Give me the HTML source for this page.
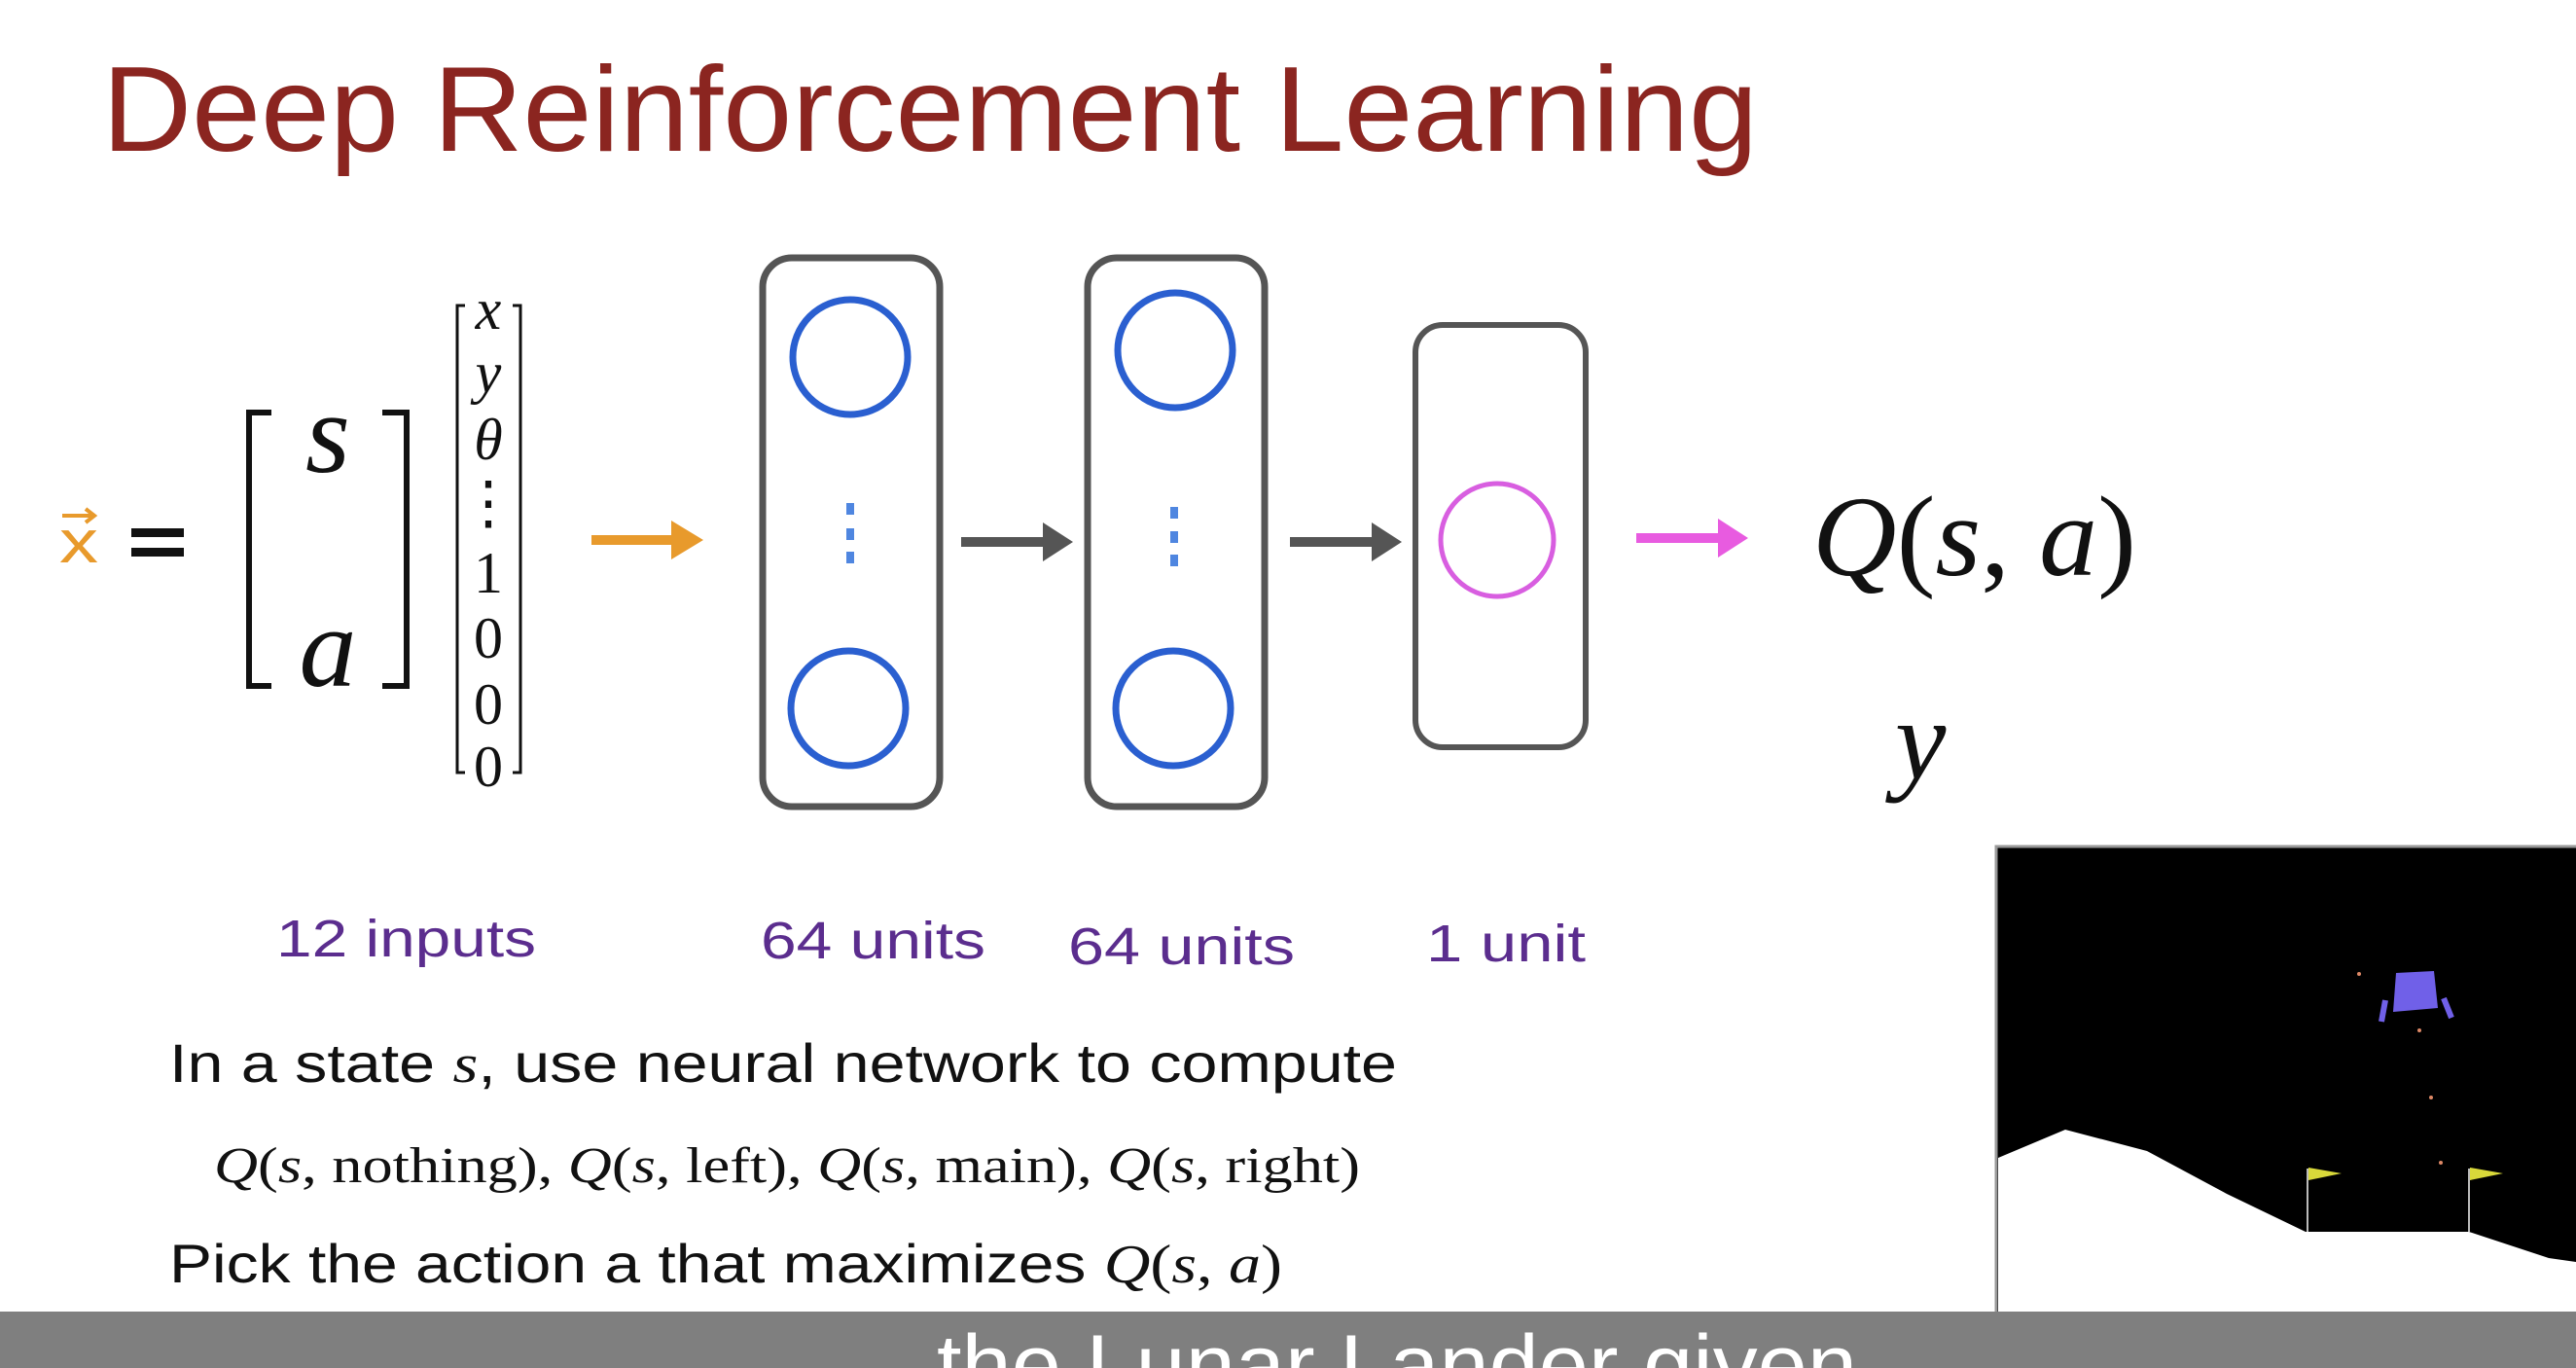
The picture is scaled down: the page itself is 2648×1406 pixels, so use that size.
<!DOCTYPE html>
<html><head><meta charset="utf-8"><style>
html,body{margin:0;padding:0;background:#fff;width:2648px;height:1406px;overflow:hidden}
svg{display:block}
</style></head><body>
<svg width="2648" height="1406" viewBox="0 0 2648 1406" xmlns="http://www.w3.org/2000/svg">
<rect width="2648" height="1406" fill="#fff"/>
<text x="105" y="155" font-family="Liberation Sans, sans-serif" font-size="124" fill="#8b2520" textLength="1702" lengthAdjust="spacingAndGlyphs">Deep Reinforcement Learning</text>

<text x="61" y="578" font-family="Liberation Sans, sans-serif" font-size="62" fill="#e89a2c" textLength="40" lengthAdjust="spacingAndGlyphs">x</text>
<path d="M64 530 H96 M88 523 L97 530 L88 537" stroke="#e89a2c" stroke-width="4" fill="none"/>
<rect x="135" y="543" width="54" height="9" fill="#111"/>
<rect x="135" y="563" width="54" height="9" fill="#111"/>

<path d="M279 424 H256 V705 H279" stroke="#111" stroke-width="6" fill="none"/>
<path d="M393 424 H418 V705 H393" stroke="#111" stroke-width="6" fill="none"/>
<text x="337" y="485" text-anchor="middle" font-family="Liberation Serif, serif" font-style="italic" font-size="118" fill="#111">s</text>
<text x="337" y="705" text-anchor="middle" font-family="Liberation Serif, serif" font-style="italic" font-size="118" fill="#111">a</text>

<path d="M478 314 H470 V794 H478" stroke="#111" stroke-width="3" fill="none"/>
<path d="M527 314 H535 V794 H527" stroke="#111" stroke-width="3" fill="none"/>
<g font-family="Liberation Serif, serif" font-size="60" fill="#111" text-anchor="middle">
<text x="502" y="338" font-style="italic">x</text>
<text x="502" y="403" font-style="italic">y</text>
<text x="502" y="472" font-style="italic">θ</text>
<text x="502" y="537">⋮</text>
<text x="502" y="609">1</text>
<text x="502" y="676">0</text>
<text x="502" y="744">0</text>
<text x="502" y="808">0</text>
</g>

<g stroke-width="10">
<line x1="608" y1="555" x2="695" y2="555" stroke="#e89a2c"/>
<line x1="988" y1="557" x2="1075" y2="557" stroke="#555"/>
<line x1="1326" y1="557" x2="1413" y2="557" stroke="#555"/>
<line x1="1682" y1="553" x2="1769" y2="553" stroke="#e85be0"/>
</g>
<polygon points="690,535 723,555 690,575" fill="#e89a2c"/>
<polygon points="1072,537 1103,557 1072,577" fill="#555"/>
<polygon points="1410,537 1441,557 1410,577" fill="#555"/>
<polygon points="1766,533 1797,553 1766,573" fill="#e85be0"/>

<rect x="784" y="265" width="182" height="564" rx="30" fill="none" stroke="#555" stroke-width="7"/>
<rect x="1118" y="265" width="182" height="564" rx="30" fill="none" stroke="#555" stroke-width="7"/>
<rect x="1455" y="334" width="175" height="434" rx="28" fill="none" stroke="#555" stroke-width="6"/>
<g fill="none" stroke="#2a5fd0" stroke-width="7">
<ellipse cx="874" cy="367" rx="59" ry="59"/>
<ellipse cx="872" cy="728" rx="59" ry="59"/>
<ellipse cx="1208" cy="360" rx="59" ry="59"/>
<ellipse cx="1206" cy="728" rx="59" ry="59"/>
</g>
<g fill="#4f86e0">
<rect x="870" y="517" width="8" height="12"/><rect x="870" y="543" width="8" height="12"/><rect x="870" y="567" width="8" height="12"/>
<rect x="1203" y="521" width="8" height="12"/><rect x="1203" y="546" width="8" height="12"/><rect x="1203" y="570" width="8" height="12"/>
</g>
<ellipse cx="1539" cy="555" rx="58" ry="58" fill="none" stroke="#d85ee0" stroke-width="5"/>

<text x="1863" y="591" font-family="Liberation Serif, serif" font-size="118" fill="#111" textLength="333" lengthAdjust="spacingAndGlyphs"><tspan font-style="italic">Q</tspan>(<tspan font-style="italic">s</tspan>, <tspan font-style="italic">a</tspan>)</text>
<text x="1948" y="800" font-family="Liberation Serif, serif" font-style="italic" font-size="118" fill="#111">y</text>

<g font-family="Liberation Sans, sans-serif" font-size="54" fill="#5b2d8e">
<text x="284" y="983" textLength="267" lengthAdjust="spacingAndGlyphs">12 inputs</text>
<text x="782" y="985" textLength="231" lengthAdjust="spacingAndGlyphs">64 units</text>
<text x="1098" y="991" textLength="233" lengthAdjust="spacingAndGlyphs">64 units</text>
<text x="1466" y="988" textLength="164" lengthAdjust="spacingAndGlyphs">1 unit</text>
</g>

<g font-family="Liberation Sans, sans-serif" font-size="56" fill="#111">
<text x="174" y="1112" textLength="1262" lengthAdjust="spacingAndGlyphs">In a state <tspan font-family="Liberation Serif, serif" font-style="italic">s</tspan>, use neural network to compute</text>
<text x="174" y="1318" textLength="1144" lengthAdjust="spacingAndGlyphs">Pick the action a that maximizes <tspan font-family="Liberation Serif, serif" font-style="italic">Q</tspan><tspan font-family="Liberation Serif, serif">(</tspan><tspan font-family="Liberation Serif, serif" font-style="italic">s</tspan><tspan font-family="Liberation Serif, serif">, </tspan><tspan font-family="Liberation Serif, serif" font-style="italic">a</tspan><tspan font-family="Liberation Serif, serif">)</tspan></text>
</g>
<text x="220" y="1215" font-family="Liberation Serif, serif" font-size="52" fill="#111" textLength="1178" lengthAdjust="spacingAndGlyphs"><tspan font-style="italic">Q</tspan>(<tspan font-style="italic">s</tspan>, nothing), <tspan font-style="italic">Q</tspan>(<tspan font-style="italic">s</tspan>, left), <tspan font-style="italic">Q</tspan>(<tspan font-style="italic">s</tspan>, main), <tspan font-style="italic">Q</tspan>(<tspan font-style="italic">s</tspan>, right)</text>

<rect x="2052" y="870" width="600" height="524" fill="#000" stroke="#999" stroke-width="3"/>
<polygon points="2054,1190 2123,1161 2207,1183 2289,1227 2370,1266 2538,1266 2620,1293 2648,1297 2648,1392 2054,1392" fill="#fff"/>
<line x1="2372" y1="1201" x2="2372" y2="1266" stroke="#bbb" stroke-width="2"/>
<line x1="2538" y1="1201" x2="2538" y2="1266" stroke="#bbb" stroke-width="2"/>
<polygon points="2373,1200 2407,1206 2373,1213" fill="#d8d83a"/>
<polygon points="2539,1200 2573,1206 2539,1213" fill="#d8d83a"/>
<polygon points="2463,1000 2502,998 2506,1036 2460,1040" fill="#7060e8"/>
<line x1="2452" y1="1028" x2="2448" y2="1050" stroke="#7060e8" stroke-width="6"/>
<line x1="2512" y1="1026" x2="2520" y2="1046" stroke="#7060e8" stroke-width="6"/>
<circle cx="2425" cy="1001" r="2" fill="#d86"/>
<circle cx="2487" cy="1059" r="2" fill="#d86"/>
<circle cx="2499" cy="1128" r="2" fill="#d86"/>
<circle cx="2509" cy="1195" r="2" fill="#d86"/>

<rect x="0" y="1348" width="2648" height="58" fill="#7f7f7f"/>
<text x="963" y="1432" font-family="Liberation Sans, sans-serif" font-size="86" fill="#fff" textLength="946" lengthAdjust="spacingAndGlyphs">the Lunar Lander given</text>
</svg>
</body></html>
